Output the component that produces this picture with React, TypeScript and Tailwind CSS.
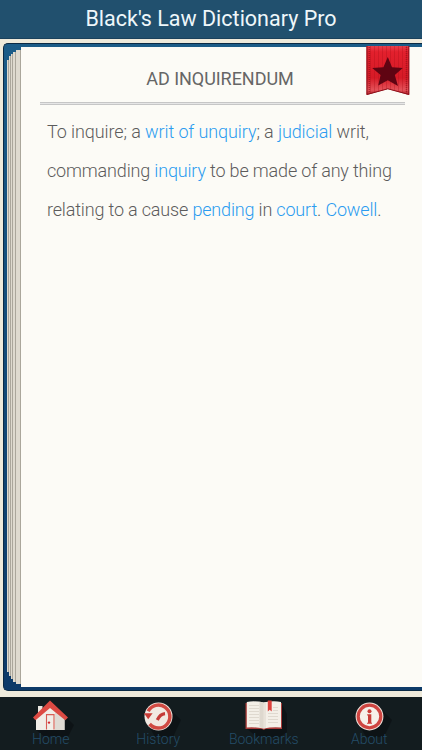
import React from "react";

type Part = { text: string; link?: boolean };

const lines: { parts: Part[]; className: string }[] = [
  {
    className: "tracking-[-0.1px]",
    parts: [
      { text: "To inquire; a " },
      { text: "writ of unquiry", link: true },
      { text: "; a " },
      { text: "judicial", link: true },
      { text: " writ," },
    ],
  },
  {
    className: "tracking-[-0.17px]",
    parts: [
      { text: "commanding " },
      { text: "inquiry", link: true },
      { text: " to be made of any thing" },
    ],
  },
  {
    className: "tracking-[-0.17px]",
    parts: [
      { text: "relating to a cause " },
      { text: "pending", link: true },
      { text: " in " },
      { text: "court", link: true },
      { text: ". " },
      { text: "Cowell", link: true },
      { text: "." },
    ],
  },
];

// leaves of the book that show left of the open page
const leaves = [
  "w-[2px] mt-[13px] mb-[15px]",
  "w-[2px] mt-[9px] mb-[11px]",
  "w-[2px] mt-[7px] mb-[8px]",
  "w-[3px] mt-[5px] mb-[5px]",
  "w-[5px] mt-[3px] mb-[3px]",
];

function Ribbon() {
  return (
    <svg className="absolute left-[366px] top-[46px]" width="44" height="50" viewBox="0 0 44 50">
      <defs>
        <linearGradient id="ribbon" x1="0" y1="0" x2="0" y2="1">
          <stop offset="0" stopColor="#e8404c" />
          <stop offset="0.12" stopColor="#e3202d" />
          <stop offset="0.65" stopColor="#d61a26" />
          <stop offset="0.9" stopColor="#e4535a" />
          <stop offset="1" stopColor="#a81822" />
        </linearGradient>
        <pattern id="weave" width="4" height="4" patternUnits="userSpaceOnUse">
          <path d="M0.5 0v4" stroke="#a80d18" strokeOpacity="0.3" />
        </pattern>
      </defs>
      <path d="M0.5 0H43.2V49L21.8 43L0.5 49Z" fill="url(#ribbon)" />
      <path d="M0.5 0H43.2V49L21.8 43L0.5 49Z" fill="url(#weave)" />
      <path d="M3.3 1V46M40.5 1V46" stroke="#8f1019" strokeWidth="1.6" strokeDasharray="1 1" opacity="0.6" />
      <path d="M1 0V48.5L21.8 42.8L42.8 48.5V0" fill="none" stroke="#8c101a" strokeWidth="1" />
      <path d="M21.8 11L26 21.3L36.8 22L28.8 28.9L32 40L21.8 34.2L12.2 39.5L14.6 28.9L6.2 22L17.4 21.3Z" fill="#5f0412" />
    </svg>
  );
}

function HomeIcon() {
  return (
    <svg width="46" height="38" viewBox="0 0 46 38">
      <path d="M37 18L45 26L39 38H16L7 31Z" fill="#0b1013" opacity="0.7" />
      <path d="M9 7H13.5V17H9Z" fill="#ebe7e1" />
      <path d="M7 18L21 6L35.5 18V31H7Z" fill="#f1ede7" />
      <path d="M21 6L35.5 18V31H26V13Z" fill="#dfdad3" />
      <path d="M21 1.5L39 18.5L36.3 21.3L21 9L6.5 21.3L4 18.5Z" fill="#dc4a43" />
      <path d="M17.5 30.5V15.6H25V30.5" fill="none" stroke="#d85c54" strokeWidth="1.1" />
      <circle cx="20" cy="23.6" r="1.2" fill="#d02d35" />
    </svg>
  );
}

function HistoryIcon() {
  return (
    <svg width="46" height="38" viewBox="0 0 46 38">
      <path d="M33 8L46 21L38 38H20L14 27Z" fill="#0b1013" opacity="0.65" />
      <circle cx="23.5" cy="17.5" r="14" fill="#f1e8e1" />
      <path d="M13.2 12.2A11.5 11.5 0 1 1 14.6 25" fill="none" stroke="#d04a43" strokeWidth="3.5" />
      <path d="M9 14.2H17.6L13.2 20.2Z" fill="#c93a35" />
      <path d="M30 14.6Q25 15 22.3 21" fill="none" stroke="#c43a37" strokeWidth="3.2" />
    </svg>
  );
}

function BookIcon() {
  return (
    <svg width="46" height="38" viewBox="0 0 46 38">
      <path d="M40 4L46 15V33L39 38H16L5 29Z" fill="#0b1013" opacity="0.65" />
      <path d="M4.5 4H41V30H24.5L22.8 31L21 30H4.5Z" fill="#a83a38" />
      <path d="M5.8 3Q14 1.4 22.8 3.6Q32 1.4 40 3V28.5Q31 27.8 22.8 29.5Q14 27.8 5.8 28.5Z" fill="#f3efe7" />
      <path d="M18.5 2.7L22.8 3.6V29.5L18.5 28.6Z" fill="#ded8ce" />
      <path d="M22.8 3.6L25 3V29L22.8 29.5Z" fill="#e8e2d9" />
      <path
        d="M8 6.5h10M8 9.5h10M8 12.5h10M8 15.5h10M8 18.5h10M8 21.5h10M8 24.5h10M27 14.5h10M27 17.5h10M27 20.5h10M27 23.5h10M32 8.5h5M32 11.5h5"
        stroke="#dfd9cf"
        strokeWidth="1"
      />
      <path d="M26.8 1.5H30.7V12.5L28.7 10.7L26.8 12.5Z" fill="#dc413c" />
    </svg>
  );
}

function InfoIcon() {
  return (
    <svg width="46" height="38" viewBox="0 0 46 38">
      <path d="M33 8L46 21L38 38H20L14 27Z" fill="#0b1013" opacity="0.65" />
      <circle cx="23.5" cy="17.5" r="13.9" fill="#f3e5de" />
      <circle cx="23.5" cy="17.5" r="11.3" fill="#f6f0ea" stroke="#cf4541" strokeWidth="3.2" />
      <circle cx="23.5" cy="12.3" r="2" fill="#c93c38" />
      <path d="M21.2 15.3H25.3V23.8H26V24.8H21V23.8H22V16.4H21.2Z" fill="#c93c38" />
    </svg>
  );
}

const tabs = [
  { label: "Home", icon: <HomeIcon />, className: "pr-[4px] *:first:ml-[3px]" },
  { label: "History", icon: <HistoryIcon />, className: "" },
  { label: "Bookmarks", icon: <BookIcon />, className: "" },
  { label: "About", icon: <InfoIcon />, className: "" },
];

export default function App() {
  return (
    <div className="relative flex h-[750px] w-[422px] flex-col overflow-hidden bg-[#eeeadb] font-['Roboto',sans-serif]">
      <header className="flex h-[39px] shrink-0 items-center justify-center border-b border-[#1a415c] bg-[#21506e]">
        <h1 className="whitespace-nowrap text-[21.5px] font-normal leading-[38px] text-[#eef7fa]">
          Black's Law Dictionary Pro
        </h1>
      </header>

      <main className="mt-[4px] ml-[3px] flex h-[648px] shrink-0 rounded-l-[5px] border-y border-l border-[#0b2a45] bg-gradient-to-b from-[#1b5c88] via-[#124a78] to-[#0d3a68] py-[3px] pl-[3px]">
        {leaves.map((leaf, i) => (
          <div key={i} className={`shrink-0 border-r border-[#aaa69b] bg-[#dedacf] ${leaf}`} />
        ))}
        <article className="min-w-0 flex-1 bg-[#fcfbf6] pl-[19px]">
          <h2 className="mr-[22px] h-[55px] whitespace-nowrap pt-[16px] text-center text-[18px] font-normal leading-[32px] tracking-[-0.05px] text-[#666]">
            AD INQUIRENDUM
          </h2>
          <div className="mr-[17px] h-[3px] border-y border-[#c6c6c6] bg-[#e6e6e6]" />
          <div className="pt-[7px] pl-[7px] text-[18px] font-light leading-[39px] text-[#5c5c5c]">
            {lines.map((line, i) => (
              <p key={i} className={`whitespace-nowrap ${line.className}`}>
                {line.parts.map((p, j) => (
                  <span key={j} className={p.link ? "text-[#2b9bf0]" : ""}>
                    {p.text}
                  </span>
                ))}
              </p>
            ))}
          </div>
        </article>
      </main>

      <Ribbon />

      <nav className="mt-[6px] grid h-[53px] shrink-0 grid-cols-4 bg-[#131c1f]">
        {tabs.map((tab) => (
          <div key={tab.label} className={`flex flex-col items-center pt-[2px] ${tab.className}`}>
            {tab.icon}
            <span className="-mt-[7px] text-[14px] font-light leading-[18px] text-[#244d68]">
              {tab.label}
            </span>
          </div>
        ))}
      </nav>
    </div>
  );
}
